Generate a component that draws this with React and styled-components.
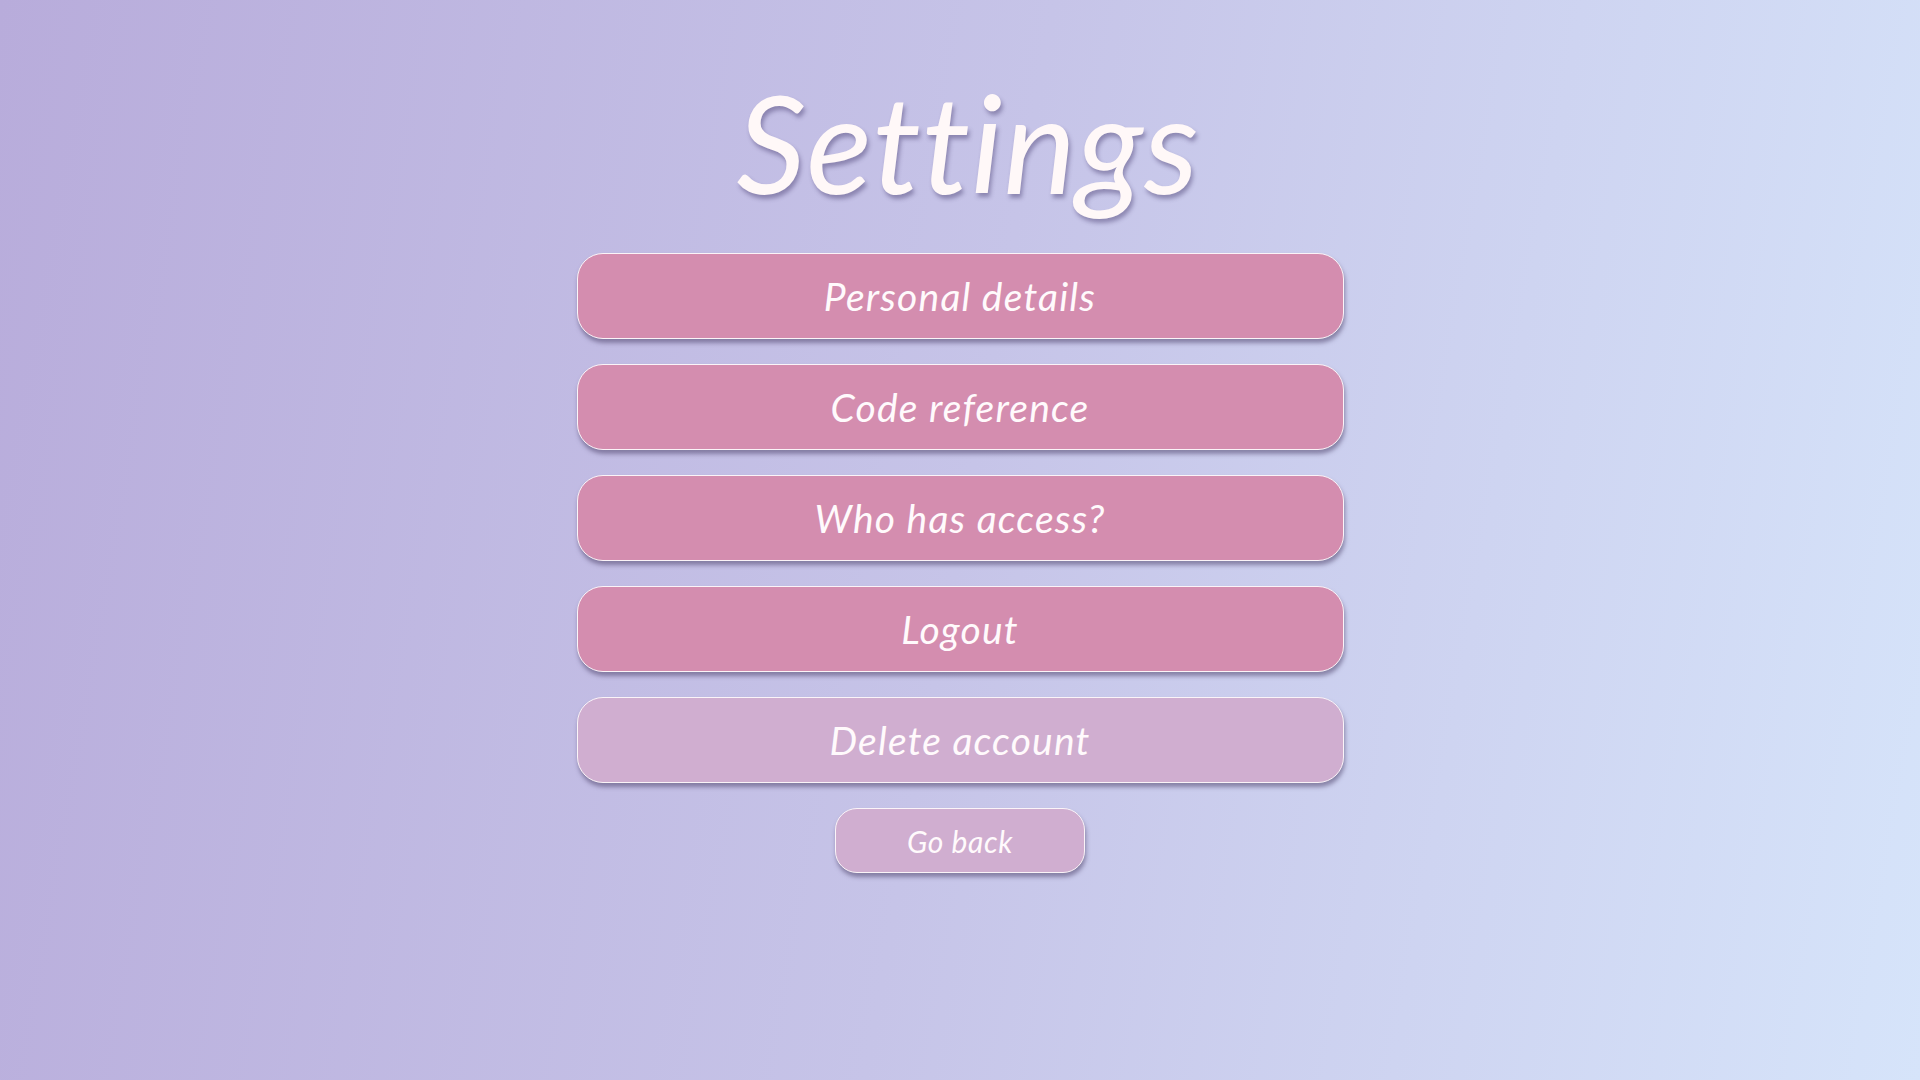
import React from 'react';
import styled, { createGlobalStyle } from 'styled-components';

const GlobalStyle = createGlobalStyle`
  html, body {
    margin: 0;
    padding: 0;
  }
  body {
    font-family: Lato, "Open Sans", sans-serif;
  }
`;

const Page = styled.main`
  min-height: 100vh;
  box-sizing: border-box;
  background: linear-gradient(100deg, #b8acdb 0%, #c6c4e8 50%, #d6e4fa 100%);
  display: flex;
  flex-direction: column;
  align-items: center;
  padding-top: 66px;
`;

const Title = styled.h1`
  margin: 0 0 37px;
  padding-left: 16px;
  font-family: Lato, sans-serif;
  font-style: italic;
  font-weight: 400;
  font-size: 137px;
  line-height: 150px;
  letter-spacing: 0.8px;
  font-variant-ligatures: none;
  color: #fff8f8;
  text-shadow: 2px 4px 4px rgba(70, 60, 110, 0.45);
`;

const Menu = styled.nav`
  display: flex;
  flex-direction: column;
  align-items: center;
  gap: 25px;
`;

const MenuButton = styled.button`
  box-sizing: border-box;
  width: ${p => (p.$small ? '250px' : '767px')};
  height: ${p => (p.$small ? '65px' : '86px')};
  border: 1.5px solid #fbf4f8;
  border-radius: ${p => (p.$small ? '22px' : '26px')};
  background: ${p => (p.$muted ? '#d0aed0' : '#d48daf')};
  color: #fffafc;
  font-family: Lato, sans-serif;
  font-style: italic;
  font-size: ${p => (p.$small ? '30px' : '39px')};
  letter-spacing: ${p => (p.$small ? '0.6px' : '1.2px')};
  font-variant-ligatures: none;
  box-shadow: 1px 4px 4px rgba(80, 70, 110, 0.55);
  cursor: pointer;
  padding: 0;
`;

const items = [
  { label: 'Personal details' },
  { label: 'Code reference' },
  { label: 'Who has access?' },
  { label: 'Logout' },
  { label: 'Delete account', muted: true },
];

export default function App() {
  return (
    <>
      <GlobalStyle />
      <Page>
        <Title>Settings</Title>
        <Menu>
          {items.map(item => (
            <MenuButton key={item.label} $muted={item.muted}>
              {item.label}
            </MenuButton>
          ))}
          <MenuButton $muted $small>Go back</MenuButton>
        </Menu>
      </Page>
    </>
  );
}
